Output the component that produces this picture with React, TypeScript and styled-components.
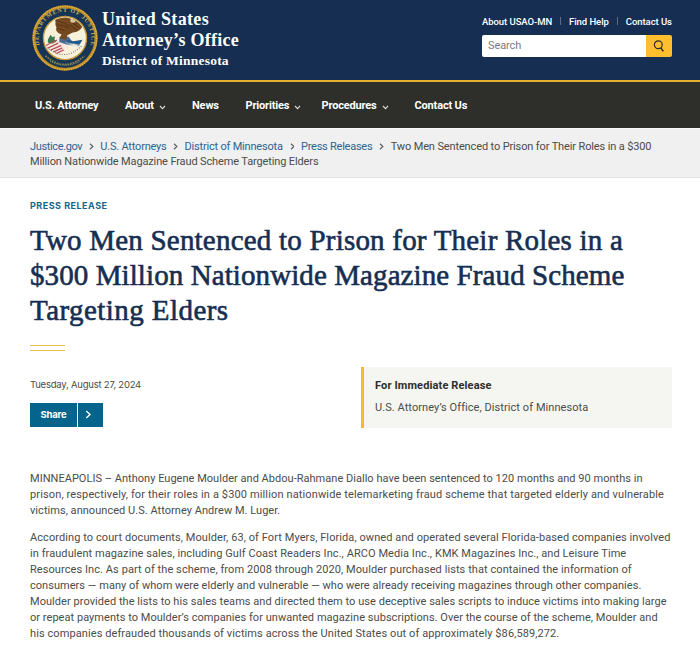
import styled, { createGlobalStyle } from "styled-components";

const GlobalStyle = createGlobalStyle`
  * {
    box-sizing: border-box;
  }

  body {
    margin: 0;
    background: #fff;
    color: #4c4c48;
    font-family: Roboto, "Liberation Sans", sans-serif;
    font-size: 11px;
  }

  a {
    color: inherit;
    text-decoration: none;
  }
`;

const Page = styled.div`
  width: 700px;
  min-height: 652px;
`;

const Header = styled.header`
  display: flex;
  justify-content: space-between;
  height: 82px;
  padding: 5px 28px 0 32px;
  background: #162e51;
  border-bottom: 2px solid #e5b02f;
`;

const Brand = styled.a`
  display: flex;
  gap: 4px;
`;

const BrandText = styled.div`
  display: flex;
  flex-direction: column;
  padding-top: 4px;
  color: #fff;
  font-family: "Liberation Serif", serif;
  font-weight: bold;
  white-space: nowrap;
`;

const BrandLine = styled.span<{ $size: number; $tracking: number }>`
  height: 20.5px;
  font-size: ${({ $size }) => $size}px;
  line-height: 21px;
  letter-spacing: ${({ $tracking }) => $tracking}px;
`;

const Utility = styled.div`
  width: 190px;
  padding-top: 10px;
`;

const UtilityLinks = styled.nav`
  display: flex;
  justify-content: space-between;
  align-items: center;
  height: 12px;
  color: #fff;
  font-size: 9.5px;
  font-weight: 500;
  letter-spacing: -0.06px;
  white-space: nowrap;
`;

const Separator = styled.span`
  width: 1px;
  height: 8px;
  background: #5d6d87;
`;

const Search = styled.form`
  display: flex;
  height: 22px;
  margin-top: 8px;
  border-radius: 2px;
  overflow: hidden;
`;

const SearchInput = styled.input`
  width: 164px;
  padding: 0 6px 1px;
  border: 0;
  border-radius: 0;
  background: #fff;
  font-family: inherit;
  font-size: 11px;
  letter-spacing: -0.1px;

  &::placeholder {
    color: #7b7b7b;
  }
`;

const SearchButton = styled.button`
  display: flex;
  flex: 1;
  align-items: center;
  justify-content: center;
  padding: 0 0 1px;
  border: 0;
  background: #ffbe2e;
  color: #2e2e2a;
`;

const MainNav = styled.nav`
  display: flex;
  height: 46px;
  padding-left: 35px;
  background: #2e2e2a;
`;

const NavItem = styled.a<{ $width: number }>`
  display: flex;
  align-items: center;
  gap: 5px;
  width: ${({ $width }) => $width}px;
  color: #fff;
  font-weight: bold;
  letter-spacing: -0.16px;
  white-space: nowrap;

  svg {
    margin-top: 4px;
  }
`;

const Breadcrumbs = styled.div`
  height: 50px;
  padding: 10px 30px 0;
  border-top: 1px solid #fafafa;
  border-bottom: 1px solid #dfe1e2;
  background: #f0f0f0;
  line-height: 15px;
  white-space: nowrap;
`;

const CrumbRow = styled.div`
  display: flex;
  align-items: center;
`;

const Crumb = styled.a<{ $width: number; $tracking: number }>`
  width: ${({ $width }) => $width}px;
  color: #2e6491;
  letter-spacing: ${({ $tracking }) => $tracking}px;
`;

const CrumbArrow = styled.span`
  display: flex;
  justify-content: center;
  width: 18px;
  color: #565c65;
`;

const CurrentCrumb = styled.span`
  letter-spacing: -0.13px;
`;

const Article = styled.main`
  padding: 22px 28px 0 30px;
`;

const Kicker = styled.div`
  color: #16658c;
  font-family: Inter, sans-serif;
  font-size: 9px;
  font-weight: bold;
  line-height: 12px;
  letter-spacing: 0.5px;
`;

const Title = styled.h1`
  margin: 11px 0 0;
  color: #162e51;
  font-family: "Liberation Serif", serif;
  font-size: 29px;
  font-weight: normal;
  line-height: 34.8px;
  -webkit-text-stroke: 0.6px #162e51;
`;

const Line = styled.span<{ $tracking: number }>`
  display: block;
  letter-spacing: ${({ $tracking }) => $tracking}px;
  white-space: nowrap;
`;

const Rule = styled.div`
  width: 35px;
  height: 6px;
  margin-top: 17.6px;
  border-top: 1px solid #edbf4d;
  border-bottom: 1px solid #edbf4d;
`;

const Meta = styled.div`
  display: flex;
  justify-content: space-between;
  height: 61px;
  margin-top: 16px;
`;

const DateText = styled.div`
  padding-top: 11px;
  font-family: Inter, sans-serif;
  font-size: 9.5px;
  line-height: 13px;
  letter-spacing: -0.22px;
`;

const ShareButton = styled.button`
  display: flex;
  width: 73px;
  height: 24px;
  margin-top: 12px;
  padding: 0;
  border: 0;
  background: #04648c;
  color: #fff;
  font-family: Inter, sans-serif;
  font-size: 9.5px;
  font-weight: bold;
  letter-spacing: -0.18px;
`;

const ShareLabel = styled.span`
  width: 48px;
  border-right: 1px solid #fff;
  line-height: 24px;
`;

const ShareArrow = styled.span`
  display: flex;
  flex: 1;
  align-items: center;
  justify-content: center;
  height: 24px;
  padding-right: 4px;
`;

const ReleaseBox = styled.aside`
  width: 311px;
  padding: 11px 0 0 11px;
  border-left: 3px solid #fdb927;
  background: #f5f6f1;
  line-height: 16px;
`;

const ReleaseTitle = styled.div`
  margin-bottom: 6px;
  color: #2e2e2a;
  font-weight: bold;
  letter-spacing: 0.13px;
`;

const ReleaseOffice = styled.div`
  letter-spacing: 0.07px;
`;

const Body = styled.div`
  padding-top: 43px;
  line-height: 16px;
`;

const Paragraph = styled.p`
  margin: 0 0 11px;
`;

const Seal = () => (
  <svg width="66" height="66" viewBox="37 17 196 196">
    <defs>
      <path id="seal-top" d="M 64 148 A 78 78 0 1 1 206 148" />
      <clipPath id="seal-disc">
        <circle cx="135" cy="115" r="61" />
      </clipPath>
    </defs>
    <circle cx="135" cy="115" r="97" fill="#bd8b27" />
    <circle cx="135" cy="115" r="94" fill="none" stroke="#e3b848" strokeWidth="4" strokeDasharray="4 3" />
    <circle cx="135" cy="115" r="88" fill="#173554" />
    <circle cx="135" cy="115" r="64" fill="#f8f1da" stroke="#c69a3d" strokeWidth="4" />
    <g clipPath="url(#seal-disc)">
      <path d="M84 120 l8 -15 6 8 7 -3 -1 11 9 2 -14 8 -15 -2z" fill="#3d7954" />
      <path d="M112 111 l35 6 -1 23 -19 21 -20 -12z" fill="#f7e9df" />
      <path d="M77 138 l34 -17 M82 146 l33 -16 M92 151 l32 -14 M101 156 l26 -12 M109 161 l22 -11" stroke="#bb5261" strokeWidth="4" />
      <path d="M119 111 l27 0 9 13 -12 12 -25 -9z" fill="#496993" />
      <path d="M140 120 l20 5 27 -5 -11 19 -13 -6 -19 2z" fill="#20588d" />
      <path d="M136 129 l44 7 M141 135 l36 5" stroke="#d8dbdb" strokeWidth="2" />
      <path d="M105 56 C115 49 123 56 131 53 C139 47 146 58 155 58 C168 55 179 61 187 78 C184 91 172 98 158 99 L142 107 139 120 119 116 125 104 C113 101 105 91 110 84 C104 76 109 67 105 56Z" fill="#74491f" />
      <path d="M107 62 C120 70 133 66 145 78 M110 73 C124 81 136 77 148 86 M112 85 L133 93 M153 66 L177 85 M149 75 L169 91" fill="none" stroke="#5a3318" strokeWidth="3" />
      <path d="M150 62 c6 -7 14 -4 17 3 l-6 5 -8 -1z" fill="#d9c8a0" />
    </g>
    <path d="M87 147 Q136 185 184 139" fill="none" stroke="#6c7980" strokeWidth="3" strokeDasharray="3 4" />
    <text fill="#c5aa5c" fontFamily="Liberation Serif, serif" fontSize="18" fontWeight="bold">
      <textPath href="#seal-top" startOffset="50%" textAnchor="middle" textLength="286">
        DEPARTMENT OF JUSTICE
      </textPath>
    </text>
    <path d="M77 168 Q135 219 193 168" fill="none" stroke="#927f4b" strokeWidth="5" strokeDasharray="5 3" />
    <path d="M91 184 Q135 207 179 184" fill="none" stroke="#7f915e" strokeWidth="4" strokeDasharray="3 3" />
  </svg>
);

const SearchIcon = () => (
  <svg width="12" height="12" viewBox="0 0 12 12" fill="none" stroke="currentColor" strokeWidth="1.2">
    <circle cx="5.3" cy="4.8" r="3.9" />
    <path d="M7.8 8 L10.4 11.4" strokeWidth="1.5" />
  </svg>
);

const ChevronDown = () => (
  <svg width="7" height="5" viewBox="0 0 7 5" fill="none" stroke="#dcdcda" strokeWidth="1.1">
    <path d="M1 1 L3.5 3.6 L6 1" />
  </svg>
);

const ChevronRight = ({ size = 7 }: { size?: number }) => (
  <svg width={size * 0.7} height={size} viewBox="0 0 5 7" fill="none" stroke="currentColor" strokeWidth="1.1">
    <path d="M1 0.7 L4 3.5 L1 6.3" />
  </svg>
);

const navItems = [
  { label: "U.S. Attorney", width: 90 },
  { label: "About", width: 67, menu: true },
  { label: "News", width: 53.5 },
  { label: "Priorities", width: 76, menu: true },
  { label: "Procedures", width: 93, menu: true },
  { label: "Contact Us", width: 60 },
];

const crumbs = [
  { label: "Justice.gov", width: 52.3, tracking: -0.36 },
  { label: "U.S. Attorneys", width: 66.2, tracking: -0.2 },
  { label: "District of Minnesota", width: 98.5, tracking: -0.19 },
  { label: "Press Releases", width: 71.7, tracking: -0.24 },
];

const titleLines = [
  { text: "Two Men Sentenced to Prison for Their Roles in a", tracking: 0.21 },
  { text: "$300 Million Nationwide Magazine Fraud Scheme", tracking: 0.09 },
  { text: "Targeting Elders", tracking: 0.44 },
];

const paragraphs = [
  [
    { text: "MINNEAPOLIS – Anthony Eugene Moulder and Abdou-Rahmane Diallo have been sentenced to 120 months and 90 months in", tracking: 0.027 },
    { text: "prison, respectively, for their roles in a $300 million nationwide telemarketing fraud scheme that targeted elderly and vulnerable", tracking: 0.133 },
    { text: "victims, announced U.S. Attorney Andrew M. Luger.", tracking: 0.04 },
  ],
  [
    { text: "According to court documents, Moulder, 63, of Fort Myers, Florida, owned and operated several Florida-based companies involved", tracking: 0.081 },
    { text: "in fraudulent magazine sales, including Gulf Coast Readers Inc., ARCO Media Inc., KMK Magazines Inc., and Leisure Time", tracking: 0.071 },
    { text: "Resources Inc. As part of the scheme, from 2008 through 2020, Moulder purchased lists that contained the information of", tracking: 0.077 },
    { text: "consumers — many of whom were elderly and vulnerable — who were already receiving magazines through other companies.", tracking: 0.036 },
    { text: "Moulder provided the lists to his sales teams and directed them to use deceptive sales scripts to induce victims into making large", tracking: 0.051 },
    { text: "or repeat payments to Moulder’s companies for unwanted magazine subscriptions. Over the course of the scheme, Moulder and", tracking: 0.043 },
    { text: "his companies defrauded thousands of victims across the United States out of approximately $86,589,272.", tracking: 0.09 },
  ],
];

const App = () => {
  return (
    <Page>
      <GlobalStyle />
      <Header>
        <Brand href="#">
          <Seal />
          <BrandText>
            <BrandLine $size={18} $tracking={0.35}>United States</BrandLine>
            <BrandLine $size={18} $tracking={0.25}>Attorney’s Office</BrandLine>
            <BrandLine $size={13.5} $tracking={0.22}>District of Minnesota</BrandLine>
          </BrandText>
        </Brand>
        <Utility>
          <UtilityLinks>
            <a href="#">About USAO-MN</a>
            <Separator />
            <a href="#">Find Help</a>
            <Separator />
            <a href="#">Contact Us</a>
          </UtilityLinks>
          <Search>
            <SearchInput placeholder="Search" />
            <SearchButton type="button" aria-label="Search">
              <SearchIcon />
            </SearchButton>
          </Search>
        </Utility>
      </Header>

      <MainNav>
        {navItems.map(({ label, width, menu }) => (
          <NavItem key={label} href="#" $width={width}>
            {label}
            {menu && <ChevronDown />}
          </NavItem>
        ))}
      </MainNav>

      <Breadcrumbs>
        <CrumbRow>
          {crumbs.map(({ label, width, tracking }) => (
            <CrumbRow key={label}>
              <Crumb href="#" $width={width} $tracking={tracking}>{label}</Crumb>
              <CrumbArrow>
                <ChevronRight />
              </CrumbArrow>
            </CrumbRow>
          ))}
          <CurrentCrumb>Two Men Sentenced to Prison for Their Roles in a $300</CurrentCrumb>
        </CrumbRow>
        <CurrentCrumb>Million Nationwide Magazine Fraud Scheme Targeting Elders</CurrentCrumb>
      </Breadcrumbs>

      <Article>
        <Kicker>PRESS RELEASE</Kicker>
        <Title>
          {titleLines.map(({ text, tracking }) => (
            <Line key={text} $tracking={tracking}>{text}</Line>
          ))}
        </Title>
        <Rule />
        <Meta>
          <div>
            <DateText>Tuesday, August 27, 2024</DateText>
            <ShareButton>
              <ShareLabel>Share</ShareLabel>
              <ShareArrow>
                <ChevronRight size={9} />
              </ShareArrow>
            </ShareButton>
          </div>
          <ReleaseBox>
            <ReleaseTitle>For Immediate Release</ReleaseTitle>
            <ReleaseOffice>U.S. Attorney’s Office, District of Minnesota</ReleaseOffice>
          </ReleaseBox>
        </Meta>
        <Body>
          {paragraphs.map((lines, i) => (
            <Paragraph key={i}>
              {lines.map(({ text, tracking }) => (
                <Line key={text} $tracking={tracking}>{text}</Line>
              ))}
            </Paragraph>
          ))}
        </Body>
      </Article>
    </Page>
  );
};

export default App;
